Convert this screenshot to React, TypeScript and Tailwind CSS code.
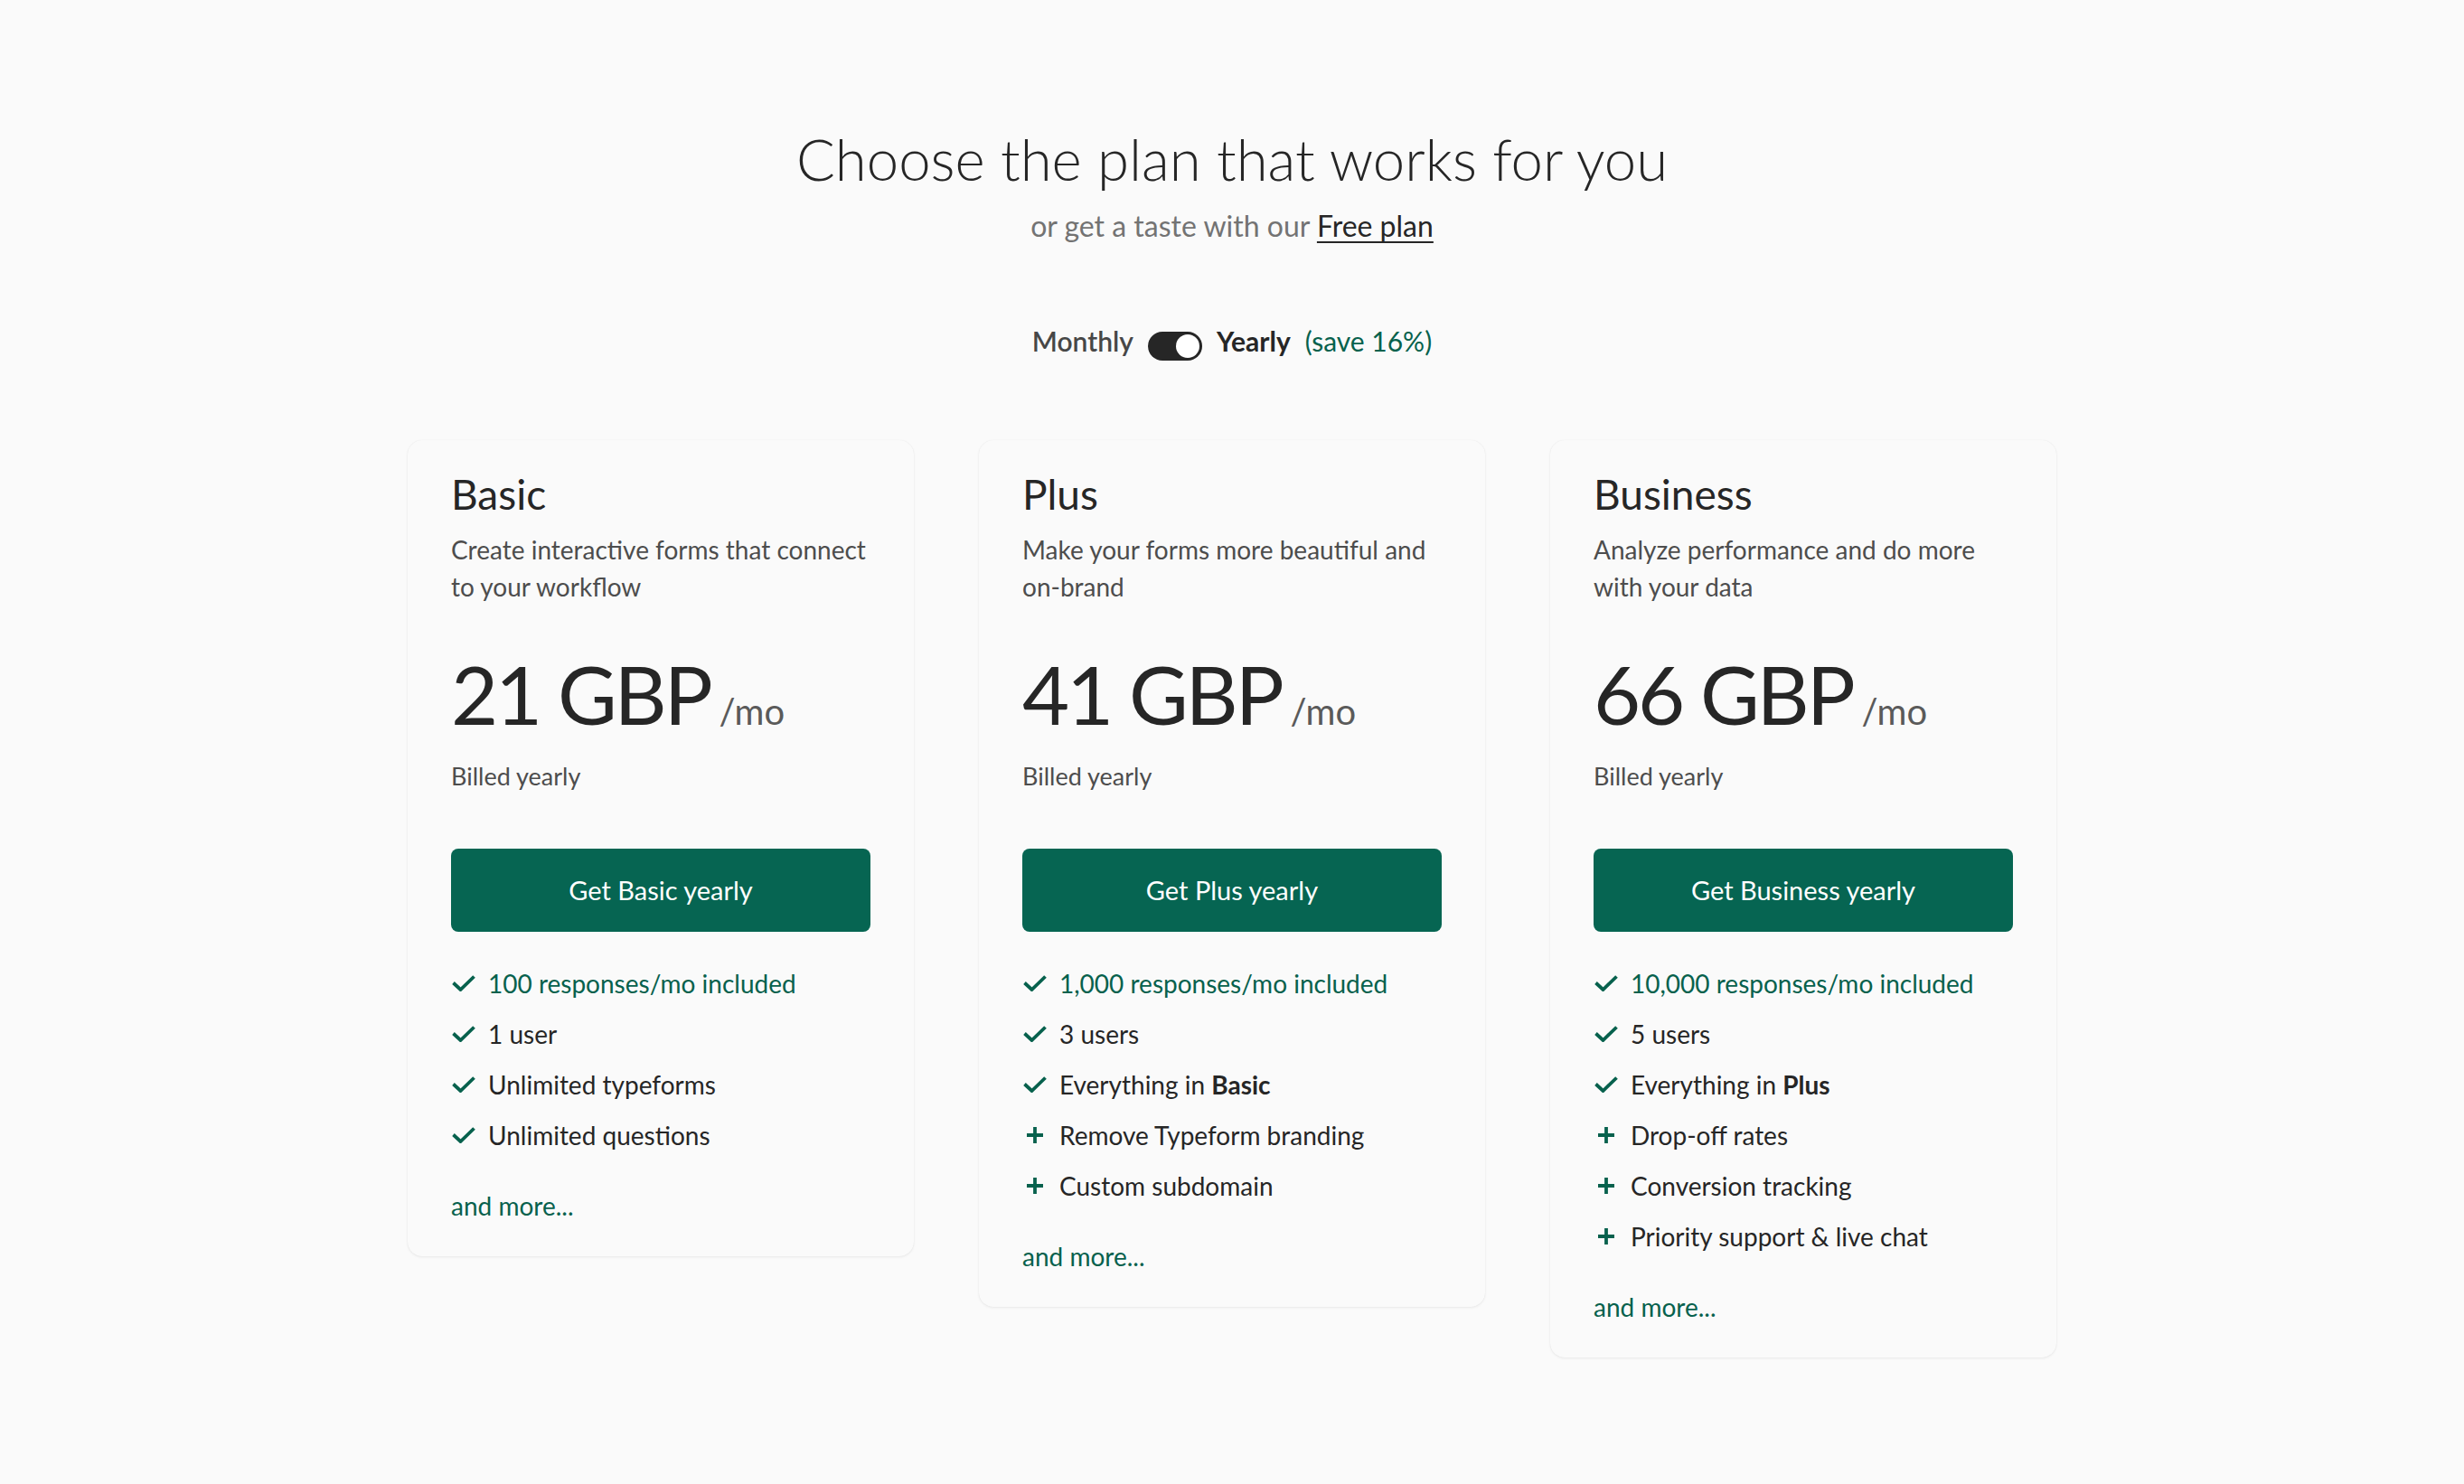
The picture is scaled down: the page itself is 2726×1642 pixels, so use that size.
import React from "react";

type Feature = {
  kind: "check" | "plus";
  text: string;
  bold?: string;
  accent?: boolean;
};

type Plan = {
  name: string;
  desc: string[];
  price: number;
  features: Feature[];
};

const plans: Plan[] = [
  {
    name: "Basic",
    desc: ["Create interactive forms that connect", "to your workflow"],
    price: 21,
    features: [
      { kind: "check", text: "100 responses/mo included", accent: true },
      { kind: "check", text: "1 user" },
      { kind: "check", text: "Unlimited typeforms" },
      { kind: "check", text: "Unlimited questions" },
    ],
  },
  {
    name: "Plus",
    desc: ["Make your forms more beautiful and", "on-brand"],
    price: 41,
    features: [
      { kind: "check", text: "1,000 responses/mo included", accent: true },
      { kind: "check", text: "3 users" },
      { kind: "check", text: "Everything in ", bold: "Basic" },
      { kind: "plus", text: "Remove Typeform branding" },
      { kind: "plus", text: "Custom subdomain" },
    ],
  },
  {
    name: "Business",
    desc: ["Analyze performance and do more", "with your data"],
    price: 66,
    features: [
      { kind: "check", text: "10,000 responses/mo included", accent: true },
      { kind: "check", text: "5 users" },
      { kind: "check", text: "Everything in ", bold: "Plus" },
      { kind: "plus", text: "Drop-off rates" },
      { kind: "plus", text: "Conversion tracking" },
      { kind: "plus", text: "Priority support & live chat" },
    ],
  },
];

function CheckIcon() {
  return (
    <svg width="26" height="18" viewBox="0 0 26 18" fill="none">
      <path
        d="M1.5 8.5 L9.5 16 L24.5 1.5"
        stroke="#07614d"
        strokeWidth="3.8"
        strokeLinejoin="miter"
      />
    </svg>
  );
}

function PlusIcon() {
  return (
    <svg width="18" height="18" viewBox="0 0 18 18" fill="none">
      <path d="M9 0 V18 M0 9 H18" stroke="#07614d" strokeWidth="3.8" />
    </svg>
  );
}

function PlanCard({ plan }: { plan: Plan }) {
  return (
    <div className="flex w-[560px] flex-col rounded-[16px] bg-[#fafafa] px-[48px] pb-[36px] pt-[32px] shadow-[0_1px_3px_rgba(0,0,0,0.07),0_0_1px_rgba(0,0,0,0.08)]">
      <h2 className="text-[46px] leading-[56px] text-[#262626]">{plan.name}</h2>
      <p className="mt-[13px] text-[28px] leading-[41px] text-[#4d4d4d]">
        <span className="block whitespace-nowrap">{plan.desc[0]}</span>
        <span className="block whitespace-nowrap">{plan.desc[1]}</span>
      </p>

      {/* Price */}
      <div className="mt-[52px] flex items-baseline leading-[90px]">
        <span className="text-[90px] leading-[90px] tracking-[-0.035em] text-[#262626]">
          {plan.price} GBP
        </span>
        <span className="ml-[10px] text-[40px] leading-none text-[#5a5a5a]">/mo</span>
      </div>
      <p className="mt-[27px] text-[27px] leading-[40px] text-[#4d4d4d]">Billed yearly</p>

      <button className="mt-[60px] flex h-[92px] w-full items-center justify-center rounded-[8px] bg-[#066552] text-[29px] text-white">
        Get {plan.name} yearly
      </button>

      <ul className="mt-[37px] flex flex-col gap-[16px]">
        {plan.features.map((f) => (
          <li key={f.text + (f.bold ?? "")} className="flex h-[40px] items-center gap-[13px]">
            <span className="flex w-[28px] items-center justify-center">
              {f.kind === "check" ? <CheckIcon /> : <PlusIcon />}
            </span>
            <span
              className={`whitespace-nowrap text-[28px] leading-[40px] ${
                f.accent ? "text-[#07614d]" : "text-[#262626]"
              }`}
            >
              {f.text}
              {f.bold && <strong className="font-bold">{f.bold}</strong>}
            </span>
          </li>
        ))}
      </ul>

      <a className="mt-[38px] text-[28px] leading-[40px] text-[#07614d]">and more...</a>
    </div>
  );
}

export default function App() {
  return (
    <div className="min-h-screen bg-[#fafafa] font-['Lato',sans-serif] text-[#262626]">
      <div className="flex flex-col items-center pb-[120px] pt-[138px]">
        <h1 className="text-[63.5px] font-light leading-[76px]">Choose the plan that works for you</h1>
        <p className="mt-[16px] text-[32px] leading-[40px] text-[#737373]">
          or get a taste with our{" "}
          <a className="text-[#262626] underline decoration-[2px] underline-offset-[5px]">Free plan</a>
        </p>

        {/* Billing toggle */}
        <div className="mt-[87px] flex items-start gap-[16px] text-[30px] leading-[40px]">
          <span className="font-semibold text-[#474747]">Monthly</span>
          <span className="mt-[10px] flex h-[32px] w-[60px] items-center justify-end rounded-full bg-[#262626] pr-[3px]">
            <span className="h-[26px] w-[26px] rounded-full bg-white" />
          </span>
          <span className="font-bold text-[#262626]">Yearly</span>
          <span className="text-[#07614d]">(save 16%)</span>
        </div>

        <div className="mt-[88px] flex items-start gap-[72px]">
          {plans.map((p) => (
            <PlanCard key={p.name} plan={p} />
          ))}
        </div>
      </div>
    </div>
  );
}
